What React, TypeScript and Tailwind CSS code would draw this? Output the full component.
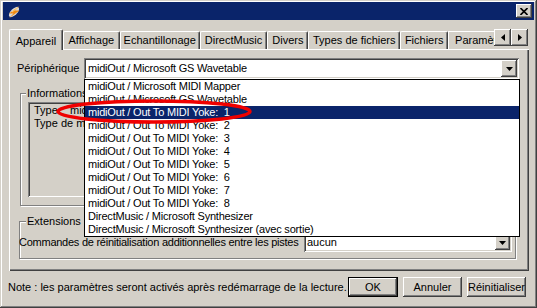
import React from "react";

const raised =
  "shadow-[inset_-1px_-1px_#404040,inset_1px_1px_#ffffff,inset_-2px_-2px_#808080,inset_2px_2px_#d4d0c8]";
const sunken =
  "shadow-[inset_1px_1px_#808080,inset_-1px_-1px_#ffffff,inset_2px_2px_#404040,inset_-2px_-2px_#d4d0c8]";
const etched =
  "border border-[#808080] shadow-[inset_1px_1px_#ffffff,1px_1px_#ffffff]";

const items = [
  "midiOut / Microsoft MIDI Mapper",
  "midiOut / Microsoft GS Wavetable",
  "midiOut / Out To MIDI Yoke:  1",
  "midiOut / Out To MIDI Yoke:  2",
  "midiOut / Out To MIDI Yoke:  3",
  "midiOut / Out To MIDI Yoke:  4",
  "midiOut / Out To MIDI Yoke:  5",
  "midiOut / Out To MIDI Yoke:  6",
  "midiOut / Out To MIDI Yoke:  7",
  "midiOut / Out To MIDI Yoke:  8",
  "DirectMusic / Microsoft Synthesizer",
  "DirectMusic / Microsoft Synthesizer (avec sortie)",
];

const DownArrow = () => (
  <svg width="7" height="4" viewBox="0 0 7 4">
    <path d="M0 0 H7 L3.5 4 Z" fill="#000" />
  </svg>
);

const Tab = ({ label, width }: { label: string; width: string }) => (
  <div
    className={`${width} h-[18px] flex items-center justify-center border-t border-l border-white border-r border-r-[#404040] rounded-t-[2px] shadow-[inset_-1px_0_#808080] whitespace-nowrap`}
  >
    {label}
  </div>
);

const Button = ({ label, width, main }: { label: string; width: string; main?: boolean }) =>
  main ? (
    <div className={`${width} h-[20px] border border-black`}>
      <div className={`w-full h-full flex items-center justify-center ${raised}`}>{label}</div>
    </div>
  ) : (
    <div className={`${width} h-[20px] flex items-center justify-center ${raised}`}>{label}</div>
  );

export default function App() {
  return (
    <div className="w-[537px] h-[308px] bg-[#d4d0c8] text-black text-[11px] leading-[13px] font-['Liberation_Sans',Arial,sans-serif] overflow-hidden shadow-[inset_-1px_-1px_#404040,inset_1px_1px_#d4d0c8,inset_-2px_-2px_#808080,inset_2px_2px_#ffffff]">
      {/* title bar */}
      <div className="px-[3px] pt-[2px]">
        <div className="h-[18px] bg-[#0a246a] flex items-center justify-between">
          <svg width="16" height="16" viewBox="0 0 16 16" className="ml-[3px] mt-[1px]">
            <ellipse cx="8" cy="8" rx="6.5" ry="3.2" transform="rotate(-45 8 8)" fill="#d8d8d8" />
            <path d="M14 1.5 L3 9.5 L7.5 9.5 L2.5 14.5 L13.5 6.5 L9 6.5 Z" fill="#f08a10" />
            <path d="M12 3.5 L6 8" stroke="#ffd27a" strokeWidth="1" />
          </svg>
          <div className={`w-[16px] h-[14px] mr-[2px] bg-[#d4d0c8] flex items-center justify-center ${raised}`}>
            <svg width="8" height="7" viewBox="0 0 8 7">
              <path d="M0.5 0 L7.5 7 M7.5 0 L0.5 7" stroke="#000" strokeWidth="1.6" />
            </svg>
          </div>
        </div>
      </div>

      <div className="px-[9px]">
        {/* tabs */}
        <div className="mt-[9px] h-[20px] flex items-end">
          <div className="relative z-10 w-[54px] h-[21px] -mb-[1px] bg-[#d4d0c8] flex items-start justify-center pt-[5px] border-t border-l border-white border-r border-r-[#404040] rounded-t-[2px] shadow-[inset_-1px_0_#808080]">
            Appareil
          </div>
          <Tab label="Affichage" width="w-[57px]" />
          <Tab label="Echantillonage" width="w-[80px]" />
          <Tab label="DirectMusic" width="w-[68px]" />
          <Tab label="Divers" width="w-[41px]" />
          <Tab label="Types de fichiers" width="w-[92px]" />
          <Tab label="Fichiers" width="w-[48px]" />
          <div className="w-[46px] h-[18px] flex items-center pl-[6px] overflow-hidden border-t border-l border-white whitespace-nowrap">
            Paramètres
          </div>
          <div className="self-start flex">
            <div className={`w-[17px] h-[17px] flex items-center justify-center ${raised}`}>
              <svg width="4" height="7" viewBox="0 0 4 7">
                <path d="M4 0 V7 L0 3.5 Z" fill="#000" />
              </svg>
            </div>
            <div className={`w-[17px] h-[17px] flex items-center justify-center ${raised}`}>
              <svg width="4" height="7" viewBox="0 0 4 7">
                <path d="M0 0 V7 L4 3.5 Z" fill="#000" />
              </svg>
            </div>
          </div>
        </div>

        {/* panel */}
        <div className="relative w-[520px] h-[222px] pt-[9px] px-[8px] shadow-[inset_1px_1px_#ffffff,inset_-1px_-1px_#404040,inset_-2px_-2px_#808080]">
          <div className="h-[21px] flex items-center">
            <div className="w-[67px]">Périphérique</div>
            <div className={`w-[435px] h-[21px] bg-white p-[2px] flex items-center ${sunken}`}>
              <div className="flex-1 pl-[2px] tracking-[-0.2px]">midiOut / Microsoft GS Wavetable</div>
              <div className={`w-[16px] h-[17px] bg-[#d4d0c8] flex items-center justify-center ${raised}`}>
                <DownArrow />
              </div>
            </div>
          </div>

          {/* Informations */}
          <div className={`relative mt-[14px] ml-[3px] w-[496px] h-[113px] ${etched}`}>
            <div className="absolute -top-[7px] left-[5px] bg-[#d4d0c8] px-[1px]">Informations</div>
            <div className={`mx-[7px] mt-[8px] h-[95px] p-[2px] ${sunken}`}>
              <div className="pl-[4px] flex whitespace-pre">
                <div className="w-[36px]">Type :</div>
                <div>midiOut / Out To MIDI Yoke:  1</div>
              </div>
              <div className="pl-[4px]">Type de matériel : synthétiseur logiciel</div>
            </div>
          </div>

          {/* Extensions */}
          <div className={`relative mt-[15px] ml-[2px] w-[497px] h-[38px] ${etched}`}>
            <div className="absolute -top-[7px] left-[6px] bg-[#d4d0c8] px-[1px]">Extensions MIDI</div>
            <div className="mt-[11px] -ml-[1px] flex items-center">
              <div className="w-[285px] whitespace-nowrap overflow-hidden tracking-[-0.25px]">
                Commandes de réinitialisation additionnelles entre les pistes
              </div>
              <div className={`w-[208px] h-[19px] bg-white p-[2px] flex items-center ${sunken}`}>
                <div className="flex-1 pl-[1px]">aucun</div>
                <div className={`w-[15px] h-[15px] bg-[#d4d0c8] flex items-center justify-center ${raised}`}>
                  <DownArrow />
                </div>
              </div>
            </div>
          </div>

          {/* open dropdown list */}
          <div className="absolute left-[75px] top-[30px] w-[436px] h-[158px] bg-white border border-black tracking-[-0.2px]">
            {items.map((it, i) => (
              <div
                key={i}
                className={`h-[13px] pl-[3px] whitespace-pre ${i === 2 ? "bg-[#0a246a] text-white" : ""}`}
              >
                {it}
              </div>
            ))}
          </div>

          {/* red highlight ellipse */}
          <svg className="absolute left-[46px] top-[50px]" width="198" height="25" viewBox="0 0 198 25">
            <ellipse cx="99" cy="12.5" rx="96" ry="10.5" fill="none" stroke="#f00000" strokeWidth="3.5" />
          </svg>
        </div>

        {/* bottom row */}
        <div className="mt-[6px] h-[20px] flex items-center justify-between">
          <div className="-ml-[1px] whitespace-nowrap">
            Note : les paramètres seront activés après redémarrage de la lecture.
          </div>
          <div className="flex items-center gap-[5px] mr-[2px]">
            <Button label="OK" width="w-[50px]" main />
            <Button label="Annuler" width="w-[59px]" />
            <Button label="Réinitialiser" width="w-[59px]" />
          </div>
        </div>
      </div>
    </div>
  );
}
